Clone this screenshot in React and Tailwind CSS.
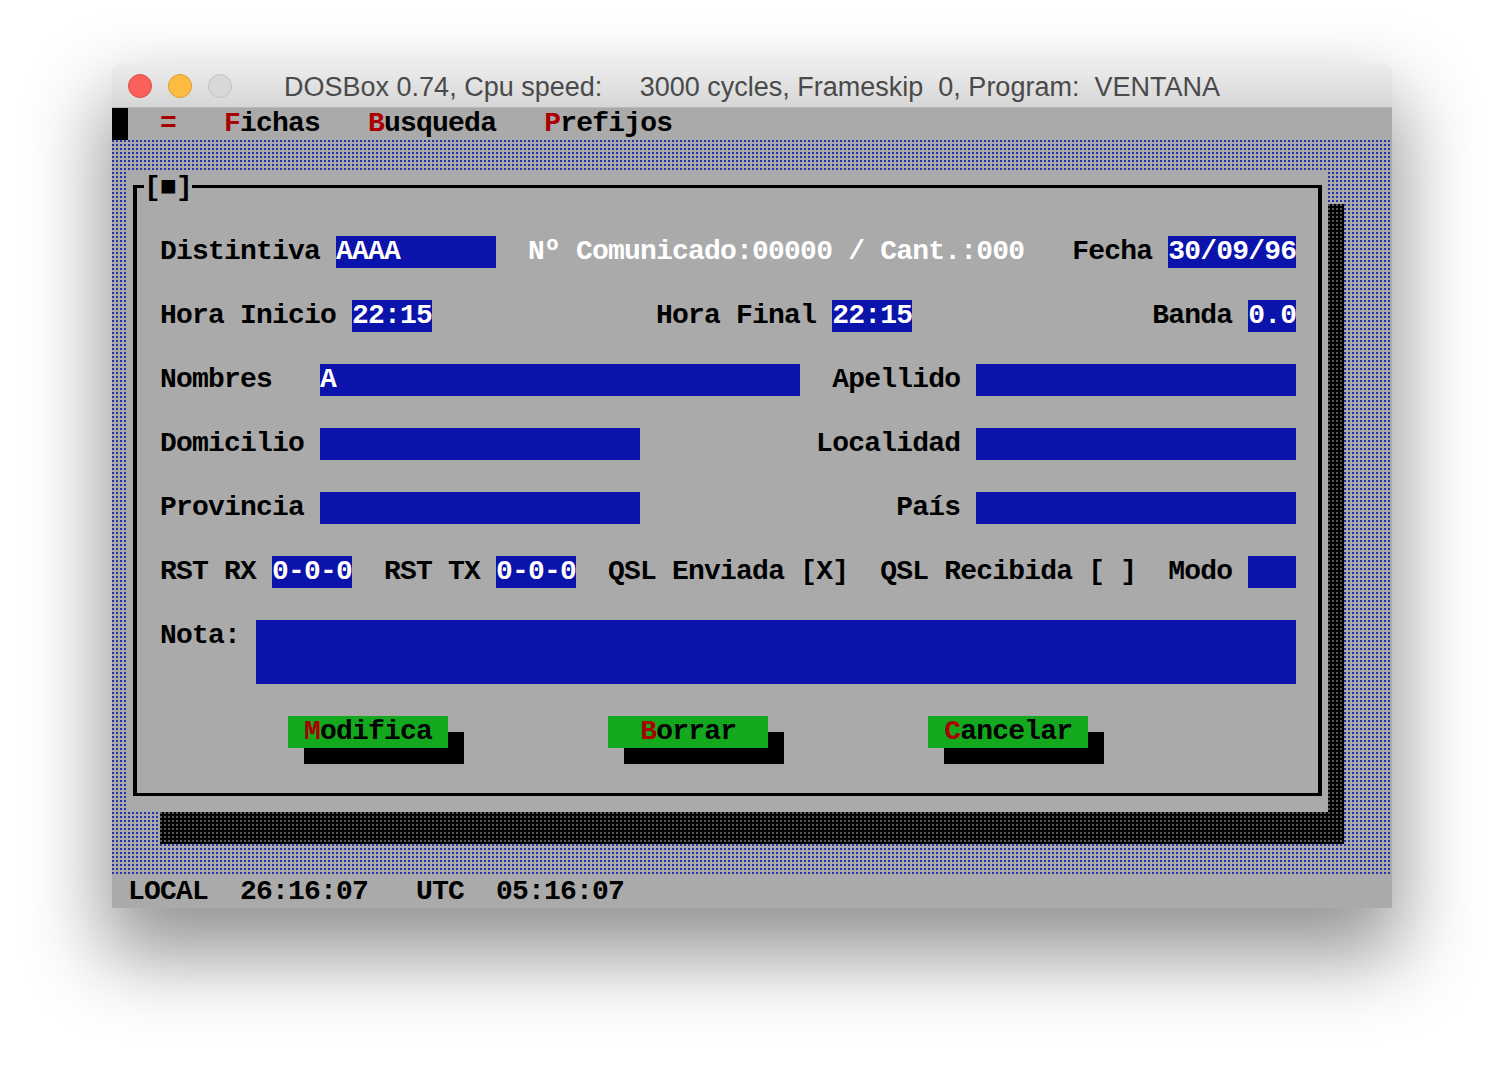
import React from 'react';

const mono = "font-['Liberation_Mono','DejaVu_Sans_Mono',monospace] font-bold text-[28px] leading-8 tracking-[-0.8px] whitespace-pre";
const gray = 'bg-[#aaaaaa]';
const dots = 'bg-[#aaaaaa] bg-[conic-gradient(at_2px_2px,#aaaaaa_75%,#2633a8_0)] bg-[length:4px_4px]';
const shade = 'bg-black bg-[conic-gradient(at_2px_2px,#000000_75%,#565656_0)] bg-[length:4px_4px]';

// blue input field, padded to its width in characters
const Field = ({ text = '', w }) => (
  <span className="inline-block h-8 bg-[#0a14aa] text-white align-top">{text.padEnd(w)}</span>
);

const Hot = ({ children }) => <span className="text-[#aa0000]">{children}</span>;

const Button = ({ pre, hot, rest }) => (
  <span className="inline-block h-8 bg-[#14a81e] text-black align-top shadow-[16px_16px_0_#000]">
    {pre}
    <Hot>{hot}</Hot>
    {rest}
  </span>
);

const Row = ({ children }) => <div className="h-8 text-black">{children}</div>;

const sp = (n) => ' '.repeat(n);

function Dialog() {
  return (
    <div className={`w-[1200px] h-[640px] ${gray} pt-[13px] pl-[5px] pr-[6px] pb-[16px] flex`}>
      <div className="relative flex-1 border-x-4 border-y-[3px] border-black pt-4 pl-[23px]">
        <span className={`absolute -top-4 left-[7px] h-8 ${gray} text-black`}>[■]</span>
        <Row />
        <Row>
          {'Distintiva '}
          <Field text="AAAA" w={10} />
          {sp(2)}
          <span className="text-white">Nº Comunicado:00000 / Cant.:000</span>
          {sp(3) + 'Fecha '}
          <Field text="30/09/96" w={8} />
        </Row>
        <Row />
        <Row>
          {'Hora Inicio '}
          <Field text="22:15" w={5} />
          {sp(14) + 'Hora Final '}
          <Field text="22:15" w={5} />
          {sp(15) + 'Banda '}
          <Field text="0.0" w={3} />
        </Row>
        <Row />
        <Row>
          {'Nombres' + sp(3)}
          <Field text="A" w={30} />
          {sp(2) + 'Apellido '}
          <Field w={20} />
        </Row>
        <Row />
        <Row>
          {'Domicilio '}
          <Field w={20} />
          {sp(11) + 'Localidad '}
          <Field w={20} />
        </Row>
        <Row />
        <Row>
          {'Provincia '}
          <Field w={20} />
          {sp(16) + 'País '}
          <Field w={20} />
        </Row>
        <Row />
        <Row>
          {'RST RX '}
          <Field text="0-0-0" w={5} />
          {sp(2) + 'RST TX '}
          <Field text="0-0-0" w={5} />
          {sp(2) + 'QSL Enviada [X]' + sp(2) + 'QSL Recibida [ ]' + sp(2) + 'Modo '}
          <Field w={3} />
        </Row>
        <Row />
        <Row>
          {'Nota: '}
          <Field w={65} />
        </Row>
        <Row>
          {sp(6)}
          <Field w={65} />
        </Row>
        <Row />
        <Row>
          {sp(8)}
          <Button pre=" " hot="M" rest="odifica " />
          {sp(10)}
          <Button pre="  " hot="B" rest="orrar  " />
          {sp(10)}
          <Button pre=" " hot="C" rest="ancelar " />
        </Row>
      </div>
    </div>
  );
}

function Screen() {
  return (
    <div className={`w-[1280px] h-[800px] flex flex-col ${mono}`}>
      <div className={`h-8 ${gray} text-black`}>
        <span className="inline-block w-4 h-8 bg-black align-top" />
        {sp(2)}
        <Hot>=</Hot>
        {sp(3)}
        <Hot>F</Hot>
        {'ichas' + sp(3)}
        <Hot>B</Hot>
        {'usqueda' + sp(3)}
        <Hot>P</Hot>
        {'refijos'}
      </div>
      <div className={`h-[736px] ${dots} pt-8 pl-4`}>
        <div className="flex">
          <Dialog />
          <div className={`w-4 h-[608px] mt-8 ${shade}`} />
        </div>
        <div className={`ml-8 w-[1184px] h-8 ${shade}`} />
      </div>
      <div className={`h-8 ${gray} text-black`}>{' LOCAL  26:16:07   UTC  05:16:07'}</div>
    </div>
  );
}

export default function App() {
  return (
    <div className="min-h-screen bg-white pt-16 pl-[112px]">
      <div className="w-[1280px] rounded-t-[7px] overflow-hidden shadow-[0_40px_80px_8px_rgba(0,0,0,0.42)]">
        <div className="h-[44px] flex items-center bg-gradient-to-b from-[#ededed] to-[#d6d6d6] border-b border-[#b9b9b9]">
          <div className="w-[120px] pl-4 flex gap-4">
            <span className="w-6 h-6 rounded-full bg-[#fc605b] border border-[#de4a44]" />
            <span className="w-6 h-6 rounded-full bg-[#fdbc40] border border-[#dd9e2d]" />
            <span className="w-6 h-6 rounded-full bg-[#d8d8d8] border border-[#c2c2c2]" />
          </div>
          <div className="flex-1 pt-[3px] text-center whitespace-pre font-['Liberation_Sans',Arial,sans-serif] text-[27px] text-[#4a4a4a]">
            {'DOSBox 0.74, Cpu speed:     3000 cycles, Frameskip  0, Program:  VENTANA'}
          </div>
          <div className="w-[120px]" />
        </div>
        <Screen />
      </div>
    </div>
  );
}
